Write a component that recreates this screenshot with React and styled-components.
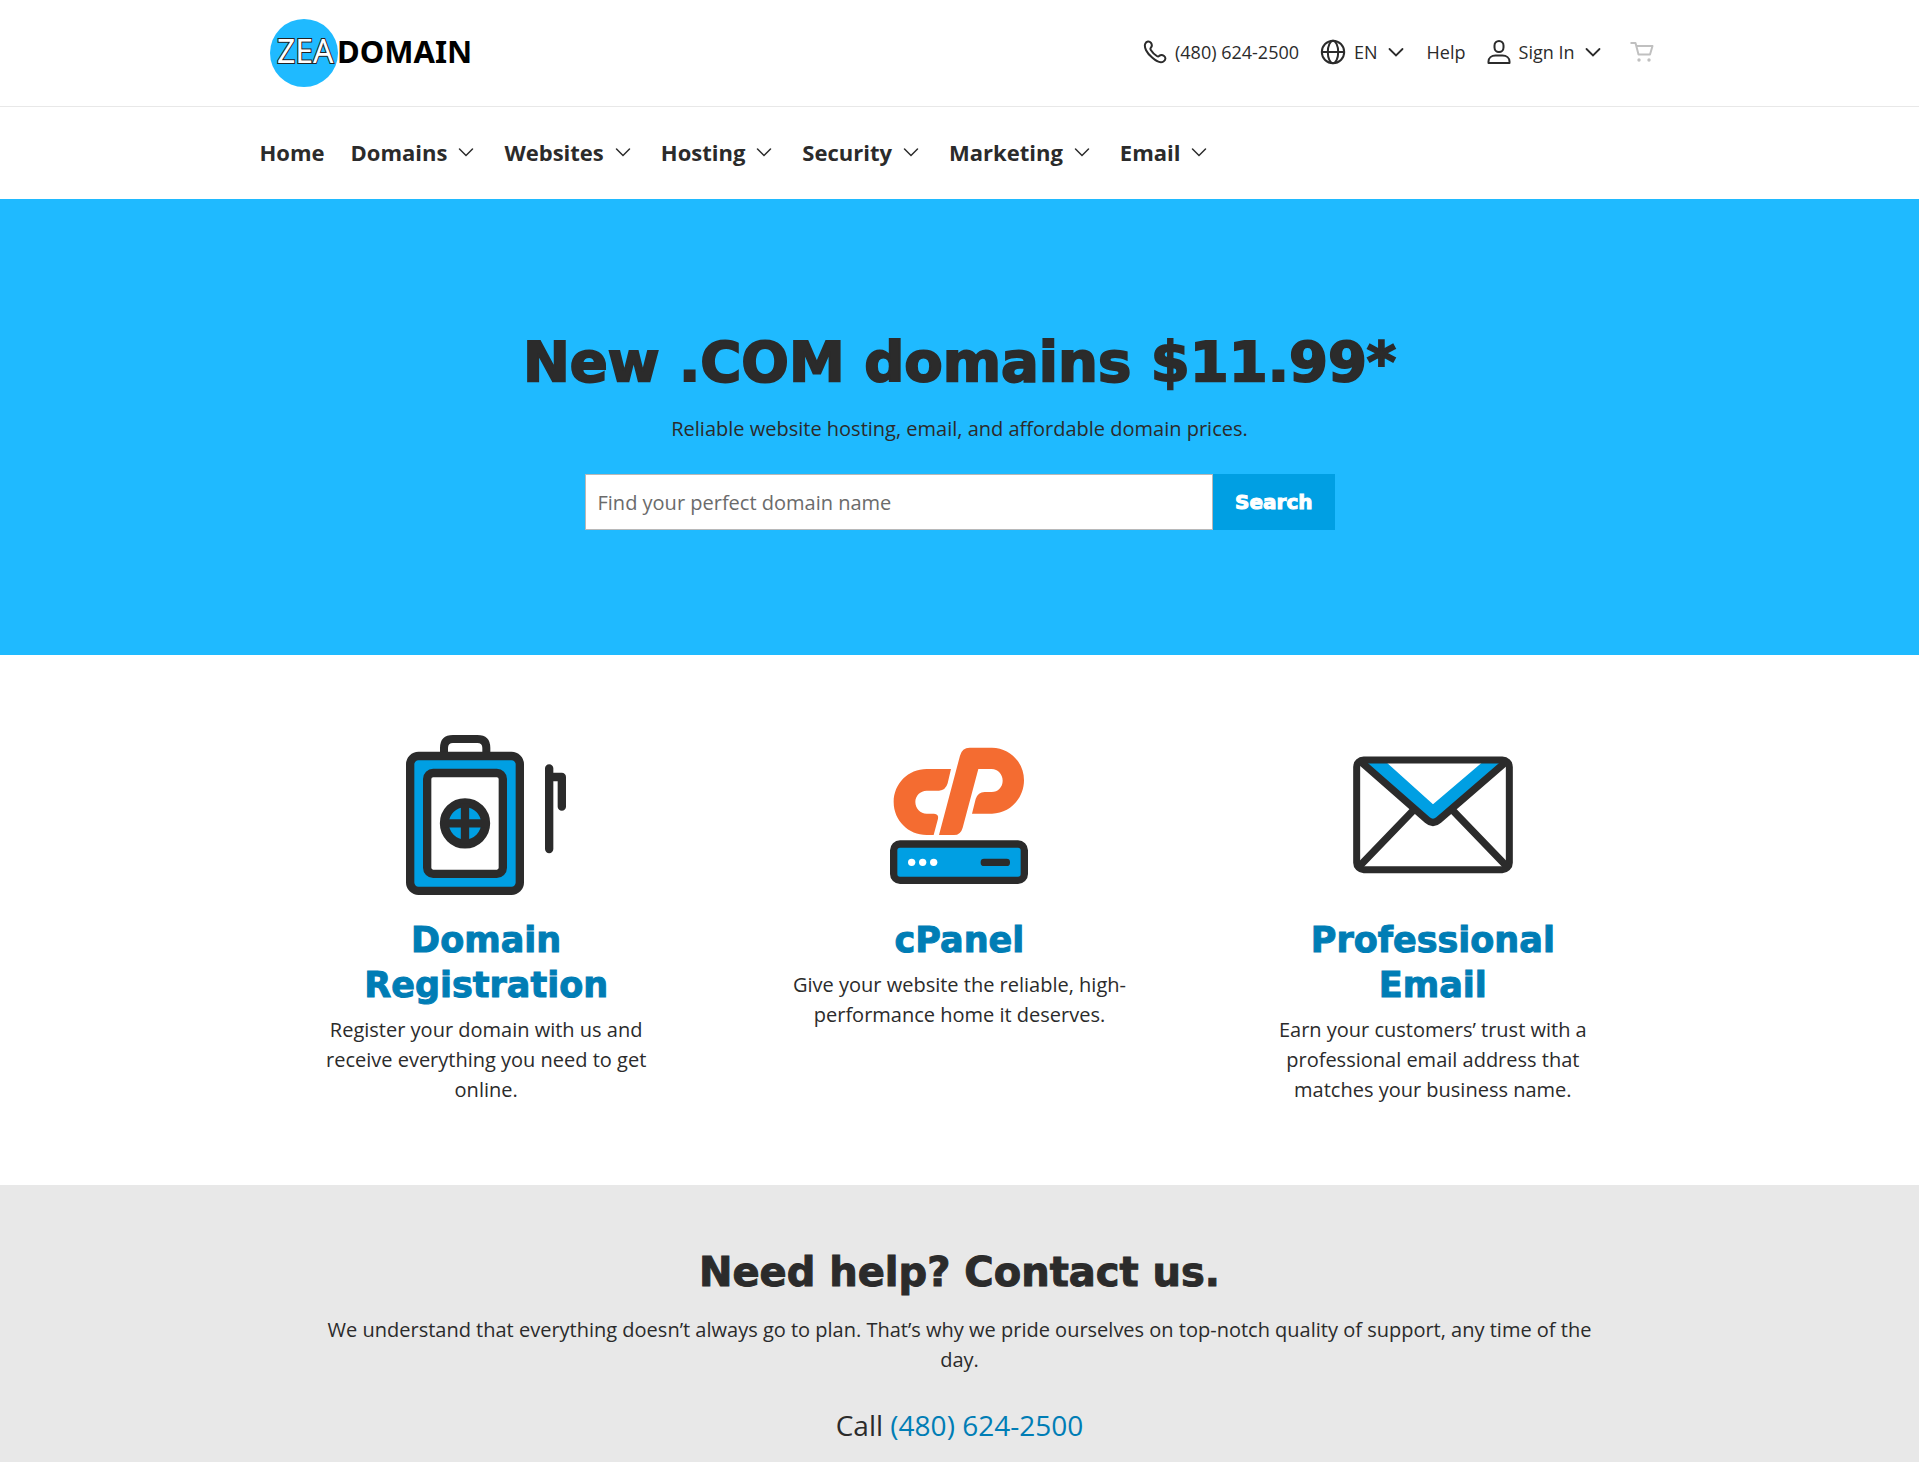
import React from "react";
import styled, { createGlobalStyle } from "styled-components";

const ink = "#2b2b2b";
const sky = "#1fbaff";
const brand = "#009fe3";
const link = "#007db5";
const display = '"Arial Black", "DejaVu Sans", sans-serif';

const GlobalStyle = createGlobalStyle`
  *, *::before, *::after { box-sizing: border-box; }
  body {
    margin: 0;
    background: #fff;
    color: ${ink};
    font-family: "Open Sans", "Noto Sans", sans-serif;
    font-size: 20px;
    line-height: 30px;
  }
  h1, h2, h3, p { margin: 0; }
  a { color: inherit; text-decoration: none; }
`;

const Page = styled.div`
  display: flex;
  flex-direction: column;
  min-height: 100vh;
`;

const Container = styled.div`
  width: 100%;
  max-width: 1420px;
  margin: 0 auto;
  padding: 0 10px;
`;

const Header = styled.header`
  border-bottom: 1px solid #e8e8e8;
`;

const HeaderRow = styled(Container)`
  display: flex;
  align-items: center;
  justify-content: space-between;
  min-height: 106px;
`;

const LogoLink = styled.a`
  display: block;
  padding-left: 10px;
`;

const LogoSvg = styled.svg`
  display: block;
  font-family: "Noto Sans", sans-serif;
`;

const Utilities = styled.div`
  display: flex;
  align-items: center;
  gap: 21px;
  padding: 0 6px 2px 0;
`;

const utilityText = `
  display: flex;
  align-items: center;
  gap: 8px;
  padding: 0;
  border: 0;
  background: none;
  color: ${ink};
  font: 400 18px/24px "Open Sans", "Noto Sans", sans-serif;
  cursor: pointer;
`;

const UtilityLink = styled.a`
  ${utilityText}
`;

const UtilityButton = styled.button`
  ${utilityText}
`;

const CartLink = styled.a`
  display: flex;
  padding-left: 6px;
  color: #c0c0c0;
`;

const Icon = styled.svg`
  display: block;
  flex: none;
  fill: none;
  stroke: currentColor;
  stroke-width: ${(p) => p.$weight || 2};
`;

const Nav = styled.nav`
  background: #fff;
`;

const NavList = styled.ul`
  display: flex;
  flex-wrap: wrap;
  align-items: center;
  gap: 26px;
  min-height: 92px;
  margin: 0;
  padding: 0 0 2px;
  list-style: none;
`;

const navText = `
  display: flex;
  align-items: center;
  gap: 8px;
  padding: 0;
  border: 0;
  background: none;
  color: ${ink};
  font: 700 22px/30px "Open Sans", "Noto Sans", sans-serif;
  cursor: pointer;
`;

const NavLink = styled.a`
  ${navText}
`;

const NavButton = styled.button`
  ${navText}
  gap: 9px;
  padding-right: 2px;
`;

const Hero = styled.section`
  padding: 127px 20px 125px;
  background: ${sky};
  text-align: center;
`;

const HeroTitle = styled.h1`
  margin-bottom: 16px;
  font: 900 56px/72px ${display};
  -webkit-text-stroke: 2px currentColor;
`;

const SearchForm = styled.form`
  display: flex;
  max-width: 750px;
  margin: 30px auto 0;
`;

const SearchInput = styled.input`
  flex: 1;
  min-width: 0;
  height: 56px;
  padding: 0 12px;
  border: 1px solid #b8b8b8;
  border-radius: 0;
  background: #fff;
  color: ${ink};
  font: 400 20px/30px "Open Sans", "Noto Sans", sans-serif;
  &::placeholder { color: #6b6b6b; opacity: 1; }
`;

const SearchButton = styled.button`
  padding: 0 22px;
  border: 0;
  background: ${brand};
  color: #fff;
  font: 900 20px/30px ${display};
  -webkit-text-stroke: 1px currentColor;
  cursor: pointer;
`;

const Features = styled(Container)`
  display: grid;
  grid-template-columns: repeat(3, 1fr);
  padding: 80px 0;
`;

const Feature = styled.article`
  justify-self: center;
  width: 100%;
  max-width: 360px;
  text-align: center;
`;

const FeatureArt = styled.svg`
  display: block;
  width: 160px;
  height: 160px;
  margin: 0 auto 23px;
`;

const FeatureTitle = styled.h3`
  max-width: 300px;
  margin: 0 auto 7px;
  color: ${link};
  font: 900 35px/45px ${display};
  -webkit-text-stroke: 1px currentColor;
`;

const Contact = styled.section`
  flex: 1;
  padding: 62px 20px 16px;
  background: #e8e8e8;
  text-align: center;
`;

const ContactBody = styled.div`
  max-width: 1280px;
  margin: 0 auto;
`;

const ContactTitle = styled.h2`
  margin-bottom: 18px;
  font: 900 40px/50px ${display};
  -webkit-text-stroke: 1px currentColor;
`;

const CallLine = styled.p`
  margin-top: 29px;
  font-size: 28px;
  line-height: 42px;
  a { color: ${link}; }
`;

function Logo() {
  return (
    <LogoSvg width="204" height="68" viewBox="0 0 204 68" role="img" aria-label="Zea Domain">
      <circle cx="34" cy="34" r="34" fill={sky} />
      <text x="7" y="44" fontSize="32" fontWeight="400" fill="#fff" stroke="#222" strokeWidth="2" paintOrder="stroke">ZEA</text>
      <text x="67" y="44" fontSize="31" fontWeight="700" fill="#000">DOMAIN</text>
    </LogoSvg>
  );
}

function Chevron({ weight = 1.8 }) {
  return (
    <Icon width="20" height="20" viewBox="0 0 20 20" $weight={weight} strokeLinecap="round" aria-hidden="true">
      <path d="M3.5 7 10 13.5 16.500 7" />
    </Icon>
  );
}

function PhoneIcon() {
  return (
    <Icon width="24" height="24" viewBox="0 0 24 24" strokeLinejoin="round" aria-hidden="true">
      <path d="M2.300 3.600C3.500 1.200 6.300.8 7.800 2.700c1.100 1.500 1.300 3.600.1 4.900-.7.8-.6 1.600-.1 2.400 1.500 2.400 3.500 4.400 6 6 .8.5 1.700.6 2.400-.1 1.500-1.200 3.400-1 4.900.1 1.900 1.400 1.700 4.100-.6 5.500-2.700 1.600-6.500.4-11.100-3.700C3.600 13.100.7 7.100 2.300 3.600Z" />
    </Icon>
  );
}

function GlobeIcon() {
  return (
    <Icon width="26" height="26" viewBox="0 0 26 26" aria-hidden="true">
      <circle cx="13" cy="13" r="11.200" />
      <ellipse cx="13" cy="13" rx="5.200" ry="11.200" />
      <path d="M2 13h22" />
    </Icon>
  );
}

function PersonIcon() {
  return (
    <Icon width="24" height="26" viewBox="0 0 24 26" strokeLinejoin="round" aria-hidden="true">
      <rect x="7.500" y="2" width="9" height="11" rx="4.500" />
      <path d="M1.500 24v-1.500c0-3.500 3-6 7-6h7c4 0 7 2.500 7 6V24Z" />
    </Icon>
  );
}

function CartIcon() {
  return (
    <Icon width="24" height="22" viewBox="0 0 24 22" aria-hidden="true">
      <path d="M.5 2h5l3 11.500h11.500L22.500 5H6.300" strokeLinejoin="round" />
      <circle cx="9" cy="19" r="1.700" fill="currentColor" stroke="none" />
      <circle cx="19" cy="19" r="1.700" fill="currentColor" stroke="none" />
    </Icon>
  );
}

function ClipboardArt() {
  return (
    <FeatureArt viewBox="78 45 480 480" aria-hidden="true">
      <path d="M192 100V84q0-27 27-27h73q27 0 27 27v16" fill="none" stroke={ink} strokeWidth="24" />
      <rect x="90.500" y="108" width="329" height="404.500" rx="25" fill={brand} stroke={ink} strokeWidth="25" />
      <rect x="141.500" y="159" width="227" height="302.500" rx="18" fill="#fff" stroke={ink} strokeWidth="25" />
      <circle cx="255" cy="310" r="62" fill={brand} stroke={ink} strokeWidth="27" />
      <path d="M255 250v120M195 310h120" stroke={ink} strokeWidth="25" />
      <path d="M507.500 145v242M507.500 171H545.500V260" fill="none" stroke={ink} strokeWidth="25" strokeLinecap="round" strokeLinejoin="round" />
    </FeatureArt>
  );
}

function CpanelArt() {
  return (
    <FeatureArt viewBox="57 45 480 480" aria-hidden="true">
      <g fill="#f46c31">
        <path d="M273 147H200C145 147 101 191 101 246S145 345 200 345H221L234 296Q237 282 222 281H200C181 281 166 265 166 246S181 212 200 212H237Q257 211 263 190Z" />
        <path d="M237 345 300 107Q306 83 329 83H396C449 83 492 127 492 181S449 281 396 281H336L347 237Q354 216 374 216H395C414 216 428 201 428 182S414 147 395 147H355L308 323Q302 345 282 345Z" />
      </g>
      <rect x="101" y="372" width="392" height="109" rx="19" fill={brand} stroke={ink} strokeWidth="22" />
      <g fill="#fff">
        <circle cx="155" cy="427" r="11" />
        <circle cx="188" cy="427" r="11" />
        <circle cx="221" cy="427" r="11" />
      </g>
      <rect x="362" y="416" width="88" height="22" rx="10" fill={ink} />
    </FeatureArt>
  );
}

function EnvelopeArt() {
  return (
    <FeatureArt viewBox="96 45 480 480" aria-hidden="true">
      <path d="M122 127 336 310 552 127H484L336 253 196 127Z" fill={brand} />
      <g fill="none" stroke={ink} strokeWidth="21">
        <rect x="107" y="120" width="458" height="329" rx="21" />
        <path d="M118 124 319 300Q336 315 353 300L557 124" strokeWidth="22" />
        <path d="M278 270 116 438M394 270 556 438" strokeWidth="22" />
      </g>
    </FeatureArt>
  );
}

const menus = ["Domains", "Websites", "Hosting", "Security", "Marketing", "Email"];

const features = [
  {
    title: "Domain Registration",
    text: "Register your domain with us and receive everything you need to get online.",
    Art: ClipboardArt,
  },
  {
    title: "cPanel",
    text: "Give your website the reliable, high-performance home it deserves.",
    Art: CpanelArt,
  },
  {
    title: "Professional Email",
    text: "Earn your customers’ trust with a professional email address that matches your business name.",
    Art: EnvelopeArt,
  },
];

export default function App() {
  return (
    <Page>
      <GlobalStyle />
      <Header>
        <HeaderRow>
          <LogoLink href="#home"><Logo /></LogoLink>
          <Utilities>
            <UtilityLink href="tel:4806242500"><PhoneIcon />(480) 624-2500</UtilityLink>
            <UtilityButton type="button"><GlobeIcon />EN<Chevron /></UtilityButton>
            <UtilityLink href="#help">Help</UtilityLink>
            <UtilityButton type="button"><PersonIcon />Sign In<Chevron /></UtilityButton>
            <CartLink href="#cart" aria-label="Cart"><CartIcon /></CartLink>
          </Utilities>
        </HeaderRow>
      </Header>
      <Nav>
        <Container>
          <NavList>
            <li><NavLink href="#home">Home</NavLink></li>
            {menus.map((name) => (
              <li key={name}><NavButton type="button">{name}<Chevron weight={1.5} /></NavButton></li>
            ))}
          </NavList>
        </Container>
      </Nav>
      <main>
        <Hero>
          <HeroTitle>New .COM domains $11.99*</HeroTitle>
          <p>Reliable website hosting, email, and affordable domain prices.</p>
          <SearchForm onSubmit={(e) => e.preventDefault()}>
            <SearchInput type="text" aria-label="Find your perfect domain name" placeholder="Find your perfect domain name" />
            <SearchButton type="submit">Search</SearchButton>
          </SearchForm>
        </Hero>
        <Features>
          {features.map(({ title, text, Art }) => (
            <Feature key={title}>
              <Art />
              <FeatureTitle>{title}</FeatureTitle>
              <p>{text}</p>
            </Feature>
          ))}
        </Features>
      </main>
      <Contact>
        <ContactBody>
          <ContactTitle>Need help? Contact us.</ContactTitle>
          <p>We understand that everything doesn’t always go to plan. That’s why we pride ourselves on top-notch quality of support, any time of the day.</p>
          <CallLine>Call <a href="tel:4806242500">(480) 624-2500</a></CallLine>
        </ContactBody>
      </Contact>
    </Page>
  );
}
